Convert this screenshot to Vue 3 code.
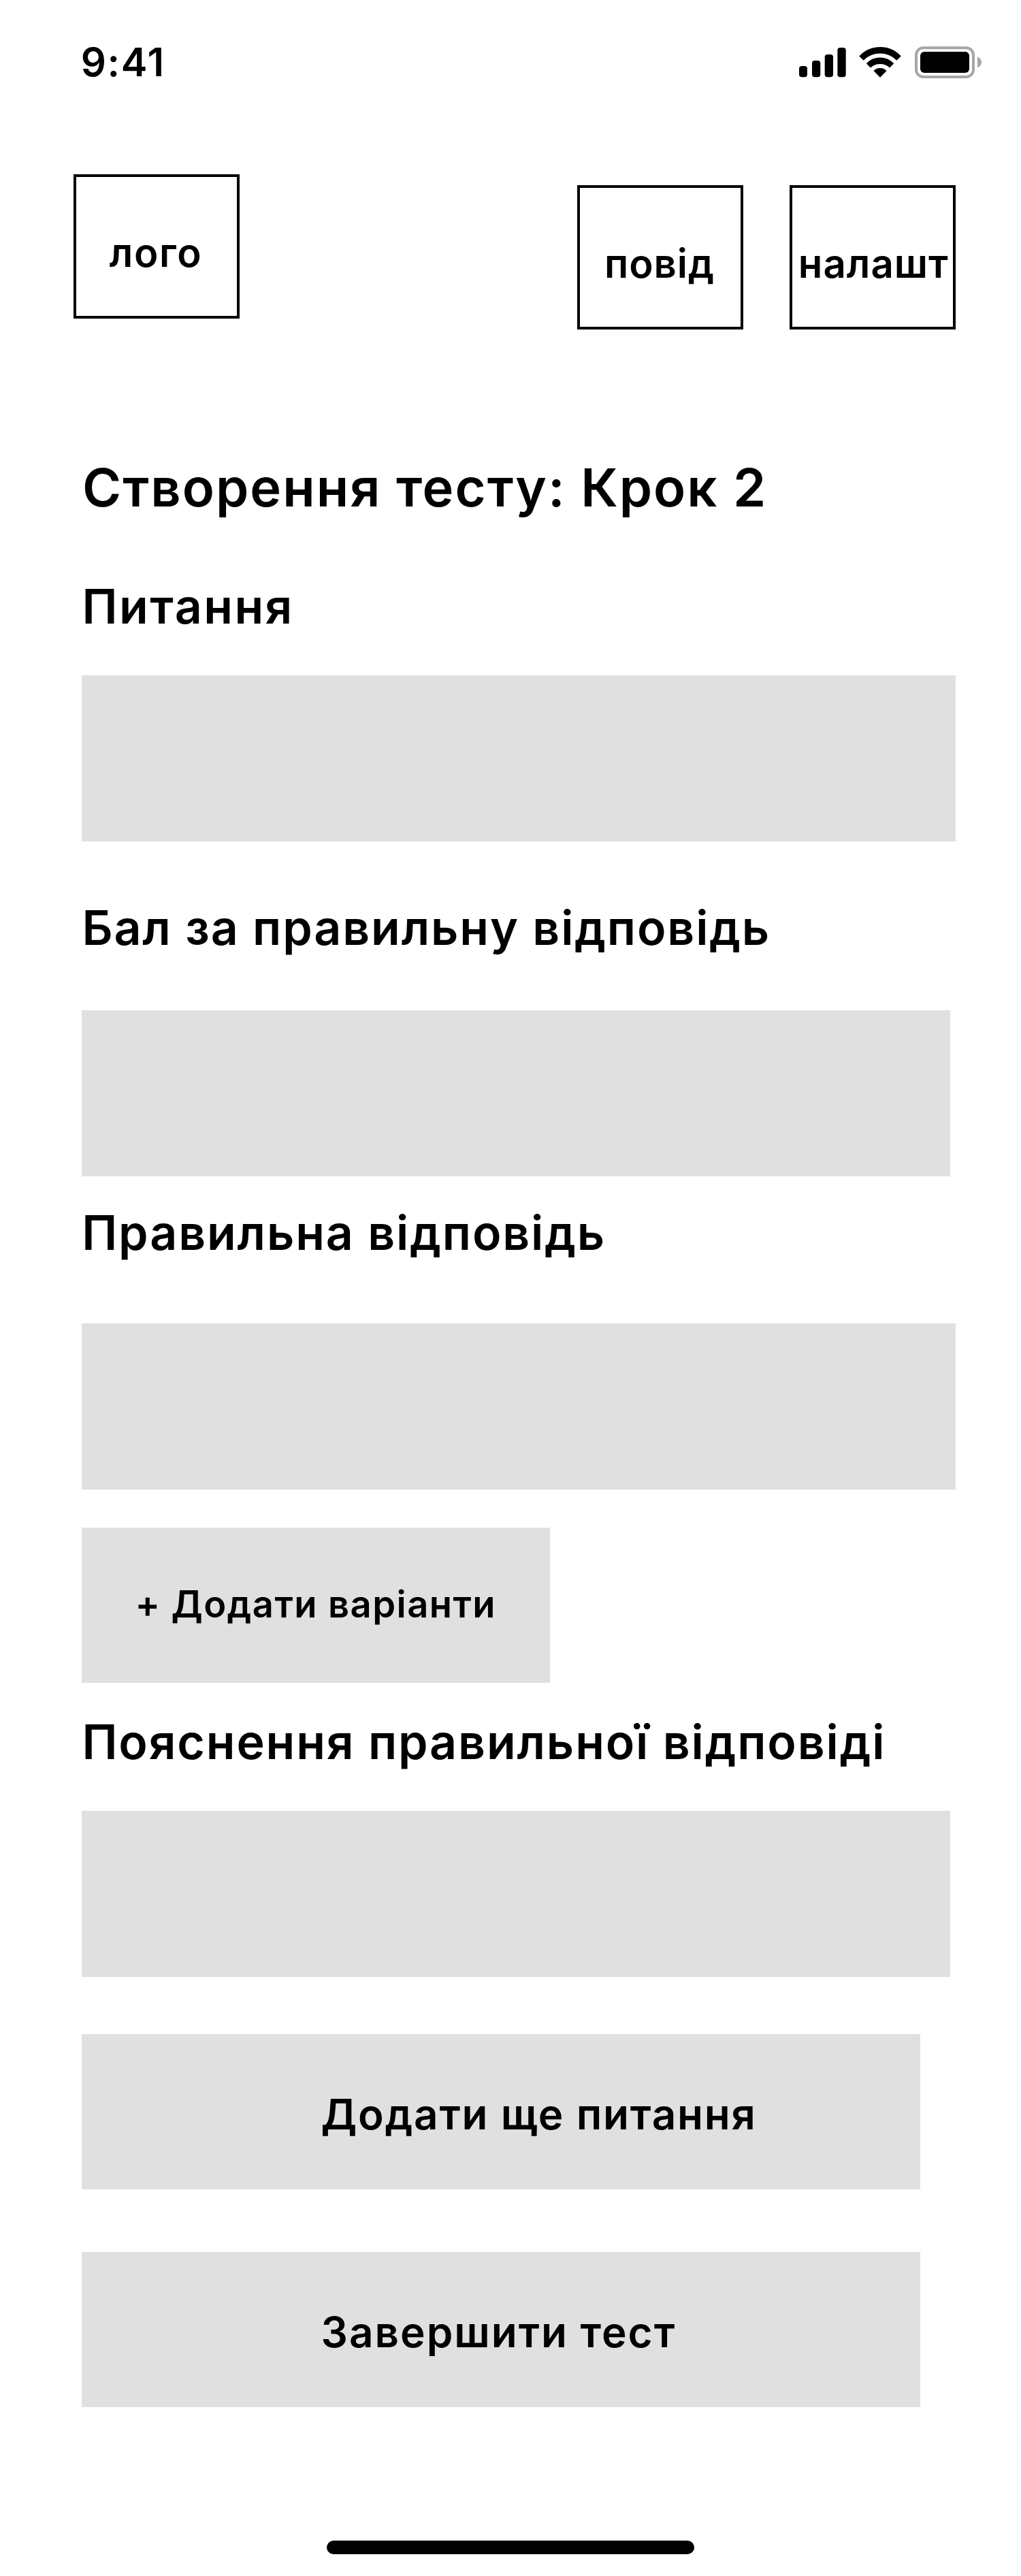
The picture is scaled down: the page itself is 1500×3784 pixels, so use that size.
<script setup>
const actions = [
  { label: 'Додати ще питання', kind: 'more' },
  { label: 'Завершити тест', kind: 'finish' },
]
</script>

<template>
  <main class="screen">
    <div class="status">
      <span class="time">9:41</span>
      <div class="indicators">
        <svg class="signal" width="69" height="44" viewBox="0 0 69 44">
          <rect x="0" y="27" width="12" height="16.3" rx="4" />
          <rect x="19" y="19" width="12.3" height="24.3" rx="4" />
          <rect x="37.7" y="10" width="12.3" height="33.3" rx="4" />
          <rect x="56.4" y="0" width="12.3" height="43.3" rx="4" />
        </svg>
        <svg class="wifi" width="62" height="46" viewBox="0 0 62 46">
          <path d="M1.3 14.5A41 41 0 0 1 60.7 14.5L55.3 19.7A34.8 34.8 0 0 0 6.7 19.7Z" />
          <path d="M11.8 25.3A27.2 27.2 0 0 1 50.2 25.3L45 30.4A21.4 21.4 0 0 0 17 30.4Z" />
          <path d="M22.5 36A12.8 12.8 0 0 1 39.5 36L31 44.7Z" />
        </svg>
        <svg class="battery" width="98" height="47" viewBox="0 0 98 47">
          <rect x="2" y="2.3" width="84" height="42.7" rx="10.5" fill="none" stroke="#a6a6a6" stroke-width="4" />
          <rect x="8" y="8" width="72" height="31" rx="6" />
          <path d="M92 15.6C95.5 17 98 20 98 23.4C98 26.8 95.5 30 92 31.3Z" fill="#a6a6a6" />
        </svg>
      </div>
    </div>

    <header class="header">
      <div class="box logo"><span>лого</span></div>
      <div class="box notices"><span>повід</span></div>
      <div class="box settings"><span>налашт</span></div>
    </header>

    <section class="form">
      <h1>Створення тесту: Крок 2</h1>

      <h2 class="question">Питання</h2>
      <div class="field wide"></div>

      <h2 class="score">Бал за правильну відповідь</h2>
      <div class="field"></div>

      <h2 class="answer">Правильна відповідь</h2>
      <div class="field wide"></div>

      <div class="button add">+ Додати варіанти</div>

      <h2 class="explain">Пояснення правильної відповіді</h2>
      <div class="field"></div>

      <div v-for="a in actions" :key="a.kind" class="button action" :class="a.kind">{{ a.label }}</div>
    </section>

    <div class="home"></div>
  </main>
</template>

<style>
body { margin: 0; background: #fff; }
</style>

<style scoped>
.screen {
  box-sizing: border-box;
  display: flex;
  flex-direction: column;
  width: 1500px;
  height: 3784px;
  background: #fff;
  color: #000;
  font-family: "Inter", "Liberation Sans", sans-serif;
  font-weight: 600;
  white-space: nowrap;
  overflow: hidden;
}
.status {
  display: flex;
  justify-content: space-between;
  align-items: flex-start;
  box-sizing: border-box;
  height: 256px;
  padding: 56px 58px 0 118.7px;
}
.time { font-size: 58.2px; line-height: 70px; letter-spacing: 1.67px; }
.indicators { display: flex; align-items: flex-start; padding-top: 12px; }
.indicators svg { display: block; overflow: visible; }
.signal { margin-top: 2px; }
.wifi { margin-left: 19px; stroke: #000; stroke-width: 1.6; stroke-linejoin: round; }
.battery { margin-left: 20px; }

.header { display: flex; align-items: flex-start; padding-left: 108px; }
.box {
  box-sizing: border-box;
  width: 244px;
  height: 212px;
  padding-top: 76px;
  border: 4px solid #000;
  font-size: 58.2px;
  line-height: 70px;
}
.box span { display: block; }
.logo { padding-left: 48.8px; letter-spacing: 1.55px; }
.notices { margin: 16px 0 0 496px; padding-left: 36px; letter-spacing: 0.95px; }
.settings { margin: 16px 0 0 68px; padding-left: 8.8px; letter-spacing: 1px; }

.form { display: flex; flex-direction: column; align-items: flex-start; padding-left: 120px; }
h1, h2 { margin: 0; font-weight: 600; }
h1 { margin: 185px 0 0 1px; font-size: 77.6px; line-height: 94px; letter-spacing: 1.98px; }
h2 { font-size: 69.8px; line-height: 85px; letter-spacing: 1.87px; }
.question { margin: 85px 0 59px 0.6px; letter-spacing: 2.46px; }
.score { margin: 84px 0 79px 0.4px; }
.answer { margin: 40px 0 91px 0.2px; }
.explain { margin: 44px 0 59px 0.4px; }
.field { width: 1276px; height: 244px; background: #e0e0e0; }
.field.wide { width: 1284px; }
.button { box-sizing: border-box; height: 228px; background: #e0e0e0; }
.add {
  width: 688px;
  margin-top: 56px;
  padding: 79px 0 0 78.5px;
  font-size: 54.3px;
  line-height: 66px;
  letter-spacing: 1.44px;
}
.action {
  width: 1232px;
  padding: 80px 0 0 351.5px;
  font-size: 62px;
  line-height: 75px;
  letter-spacing: 1.79px;
}
.more { margin-top: 84px; }
.finish { margin-top: 92px; letter-spacing: 1.98px; }

.home { width: 540px; height: 20px; margin: auto 0 32px 480px; border-radius: 10px; background: #000; }
</style>
